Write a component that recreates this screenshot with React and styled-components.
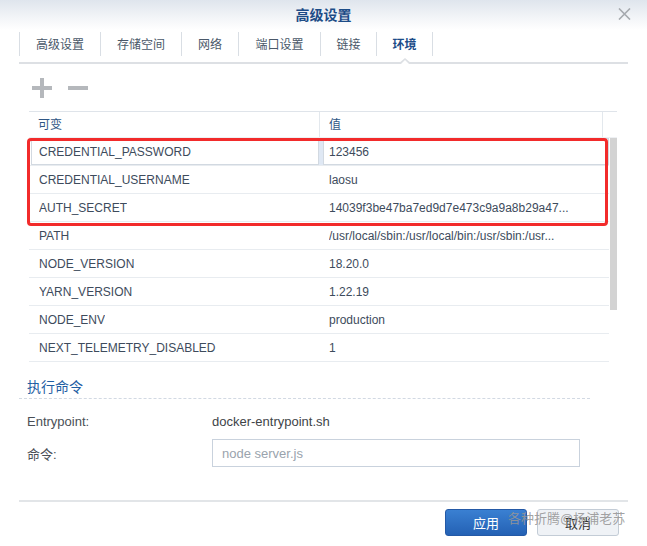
import React from "react";
import styled, { createGlobalStyle } from "styled-components";

const Global = createGlobalStyle`
  html, body { margin: 0; padding: 0; background: #fff; }
  body { font-family: "Liberation Sans", "Noto Sans CJK SC", sans-serif; }
  * { box-sizing: border-box; }
`;

const FONT = `"Liberation Sans", "Noto Sans CJK SC", sans-serif`;

const Window = styled.div`
  position: relative;
  width: 647px;
  height: 546px;
  background: #fff;
  overflow: hidden;
  font-family: ${FONT};
`;

const TitleBar = styled.div`
  height: 30px;
  display: grid;
  grid-template-columns: 1fr auto 1fr;
  align-items: center;
  padding-bottom: 3px;
  background: linear-gradient(#dfe5ed 0%, #f3f5f8 60%, #ffffff 100%);
`;

const Title = styled.div`
  grid-column: 2;
  font-size: 14px;
  font-weight: bold;
  color: #1c4c87;
`;

const Close = styled.div`
  grid-column: 3;
  justify-self: end;
  margin-right: 16px;
  display: flex;
  align-items: center;
`;

const Content = styled.div`
  padding: 0 19px;
`;

const Tabs = styled.div`
  display: flex;
  padding: 2px 0 6px;
  border-bottom: 2px solid #dde0e4;
  position: relative;
`;

const Tab = styled.div`
  position: relative;
  width: ${(p) => p.$w}px;
  height: 24px;
  display: flex;
  align-items: center;
  justify-content: center;
  padding-bottom: 2px;
  border-left: 1px solid #d9dee4;
  ${(p) => (p.$last ? "border-right: 1px solid #d9dee4;" : "")}
  font-size: 12px;
  color: ${(p) => (p.$active ? "#1d4c88" : "#4a5869")};
  font-weight: ${(p) => (p.$active ? "bold" : "normal")};
`;

const Notch = styled.span`
  position: absolute;
  left: 50%;
  bottom: -8px;
  margin-left: -7px;
  width: 0;
  height: 0;
  border-left: 7px solid transparent;
  border-right: 7px solid transparent;
  border-bottom: 6px solid #dde0e4;
  &::after {
    content: "";
    position: absolute;
    left: -5px;
    top: 2px;
    border-left: 5px solid transparent;
    border-right: 5px solid transparent;
    border-bottom: 5px solid #fff;
  }
`;

const Toolbar = styled.div`
  display: flex;
  gap: 16px;
  padding: 14px 0 0 13px;
  height: 47px;
`;

const ToolIcon = styled.svg`
  display: block;
`;

const Table = styled.div`
  margin: 0 11px 0 10px;
`;

const HeaderRow = styled.div`
  display: grid;
  grid-template-columns: 290px 1fr 15px;
  height: 27px;
  border-top: 1px solid #dfe4ea;
  border-bottom: 1px solid #eef1f4;
`;

const HeadCell = styled.div`
  display: flex;
  align-items: center;
  padding: 0 0 2px 9px;
  font-size: 12px;
  color: #2f5685;
  & + & { border-left: 1px solid #e3e8ed; }
`;

const BodyWrap = styled.div`
  position: relative;
  display: flex;
`;

const Rows = styled.div`
  flex: 1;
  min-width: 0;
`;

const Row = styled.div`
  display: grid;
  grid-template-columns: 290px 1fr;
  height: 28px;
  border-bottom: 1px solid #e8ecf0;
`;

const Cell = styled.div`
  display: flex;
  align-items: center;
  padding: 1px 12px 0 10px;
  font-size: 12px;
  color: #3d4b5c;
  white-space: nowrap;
  overflow: hidden;
  ${(p) =>
    p.$sel
      ? `box-shadow: inset 0 0 0 1px #d2d9e1; background: #fff;`
      : ""}
  ${(p) => (p.$sel && p.$val ? `border-left: 4px solid #dfe8f4; padding-left: 6px;` : "")}
  ${(p) => (p.$sel && !p.$val ? `margin-left: 2px; padding-left: 8px;` : "")}
`;

const CellText = styled.span`
  overflow: hidden;
  text-overflow: ellipsis;
`;

const ScrollTrack = styled.div`
  width: 8px;
  padding-left: 1px;
`;

const ScrollThumb = styled.div`
  width: 7px;
  height: 172px;
  background: #d3d3d3;
`;

const Highlight = styled.div`
  position: absolute;
  left: -2px;
  top: 0;
  width: 581px;
  height: 88px;
  border: 3px solid #f22b2b;
  border-radius: 4px;
  pointer-events: none;
`;

const Section = styled.div`
  margin-top: 15px;
`;

const SectionTitle = styled.div`
  padding-left: 8px;
  height: 22px;
  line-height: 20px;
  font-size: 14px;
  color: #1f5ea3;
  width: 571px;
  border-bottom: 1px dashed #d2d9e3;
`;

const Form = styled.div`
  padding: 8px 0 0 8px;
  display: flex;
  flex-direction: column;
  gap: 4px;
`;

const FormRow = styled.div`
  display: grid;
  grid-template-columns: 185px 368px;
  height: 28px;
  align-items: center;
`;

const Label = styled.div`
  font-size: 13px;
  color: #4a4f56;
`;

const Value = styled.div`
  font-size: 13px;
  color: #404448;
`;

const Input = styled.input`
  height: 28px;
  width: 368px;
  border: 1px solid #c9d2dd;
  padding: 0 9px;
  font-family: ${FONT};
  font-size: 13px;
  color: #333;
  outline: none;
  &::placeholder { color: #9aa3ad; }
`;

const Footer = styled.div`
  margin-top: 33px;
  border-top: 2px solid #e2e5e8;
  display: flex;
  justify-content: flex-end;
  gap: 10px;
  padding: 7px 9px 0 0;
`;

const Button = styled.button`
  width: 82px;
  height: 27px;
  border-radius: 3px;
  font-family: ${FONT};
  font-size: 13px;
  cursor: pointer;
  ${(p) =>
    p.$primary
      ? `background: linear-gradient(#3a80d2, #2461b4); border: 1px solid #2459a6; color: #fff;`
      : `background: #eff2f6; border: 1px solid #c3ccd6; color: #333;`}
`;

const Watermark = styled.div`
  position: absolute;
  left: 508px;
  top: 511px;
  font-size: 13px;
  line-height: 16px;
  color: rgba(150, 150, 150, 0.9);
  pointer-events: none;
  white-space: nowrap;
`;

const tabs = [
  { label: "高级设置", w: 81 },
  { label: "存储空间", w: 81 },
  { label: "网络", w: 57 },
  { label: "端口设置", w: 82 },
  { label: "链接", w: 56 },
  { label: "环境", w: 57, active: true },
];

const envs = [
  ["CREDENTIAL_PASSWORD", "123456"],
  ["CREDENTIAL_USERNAME", "laosu"],
  ["AUTH_SECRET", "14039f3be47ba7ed9d7e473c9a9a8b29a47..."],
  ["PATH", "/usr/local/sbin:/usr/local/bin:/usr/sbin:/usr..."],
  ["NODE_VERSION", "18.20.0"],
  ["YARN_VERSION", "1.22.19"],
  ["NODE_ENV", "production"],
  ["NEXT_TELEMETRY_DISABLED", "1"],
];

export default function App() {
  return (
    <Window>
      <Global />
      <TitleBar>
        <Title>高级设置</Title>
        <Close>
          <svg width="13" height="12" viewBox="0 0 13 12">
            <path d="M1 0.5 L12 11.5 M12 0.5 L1 11.5" stroke="#a5a9ae" strokeWidth="1.6" />
          </svg>
        </Close>
      </TitleBar>
      <Content>
        <Tabs>
          {tabs.map((t, i) => (
            <Tab key={t.label} $w={t.w} $active={t.active} $last={i === tabs.length - 1}>
              {t.label}
              {t.active && <Notch />}
            </Tab>
          ))}
        </Tabs>
        <Toolbar>
          <ToolIcon width="20" height="20" viewBox="0 0 20 20">
            <rect x="0" y="8" width="20" height="4" fill="#b5b8bc" />
            <rect x="8" y="0" width="4" height="20" fill="#b5b8bc" />
          </ToolIcon>
          <ToolIcon width="20" height="20" viewBox="0 0 20 20">
            <rect x="0" y="8" width="20" height="4" fill="#b5b8bc" />
          </ToolIcon>
        </Toolbar>
        <Table>
          <HeaderRow>
            <HeadCell>可变</HeadCell>
            <HeadCell>值</HeadCell>
            <HeadCell />
          </HeaderRow>
          <BodyWrap>
            <Rows>
              {envs.map(([k, v], i) => (
                <Row key={k}>
                  <Cell $sel={i === 0}>
                    <CellText>{k}</CellText>
                  </Cell>
                  <Cell $sel={i === 0} $val>
                    <CellText>{v}</CellText>
                  </Cell>
                </Row>
              ))}
            </Rows>
            <ScrollTrack>
              <ScrollThumb />
            </ScrollTrack>
            <Highlight />
          </BodyWrap>
        </Table>
        <Section>
          <SectionTitle>执行命令</SectionTitle>
          <Form>
            <FormRow>
              <Label>Entrypoint:</Label>
              <Value>docker-entrypoint.sh</Value>
            </FormRow>
            <FormRow>
              <Label>命令:</Label>
              <Input placeholder="node server.js" />
            </FormRow>
          </Form>
        </Section>
        <Footer>
          <Button $primary>应用</Button>
          <Button>取消</Button>
        </Footer>
      </Content>
      <Watermark>各种折腾@杨浦老苏</Watermark>
    </Window>
  );
}
